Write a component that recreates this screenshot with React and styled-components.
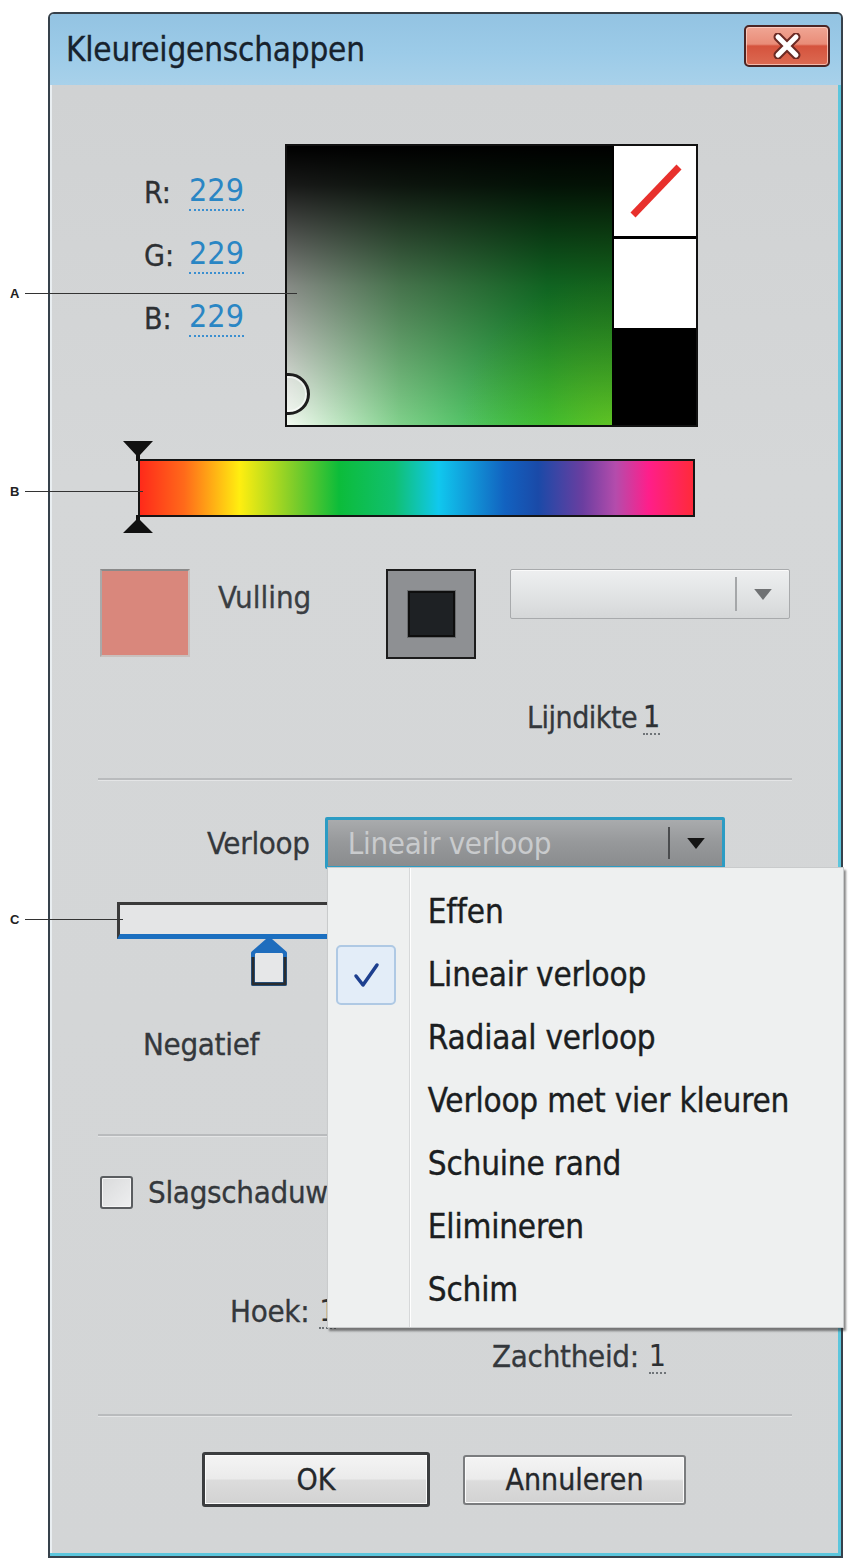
import React from 'react';
import styled, {createGlobalStyle} from 'styled-components';

const font = `"DejaVu Sans Condensed", "DejaVu Sans", "Liberation Sans", sans-serif`;

const GlobalStyle = createGlobalStyle`
  html, body {
    margin: 0;
    padding: 0;
    background: #ffffff;
  }
  body {
    font-family: ${font};
    color: #2b2f33;
  }
`;

const Page = styled.div`
  position: relative;
  width: 854px;
  height: 1562px;
  overflow: hidden;
  padding-top: 12px;
  box-sizing: border-box;
`;

const Callout = styled.div`
  position: absolute;
  left: 10px;
  top: ${p => p.$top}px;
  display: flex;
  align-items: center;
  gap: 6px;
  font-family: "Liberation Sans", sans-serif;
  font-weight: bold;
  font-size: 13px;
  color: #222;
  z-index: 5;

  &::after {
    content: '';
    display: block;
    width: ${p => p.$len}px;
    height: 1.5px;
    background: #333;
  }
`;

const Window = styled.div`
  margin-left: 48px;
  width: 795px;
  height: 1546px;
  box-sizing: border-box;
  border: 2px solid #36414b;
  border-radius: 6px 6px 0 0;
  background: linear-gradient(180deg, #cfd1d2 0%, #d5d7d8 30%, #d3d5d6 100%);
  box-shadow: inset -3px -3px 0 #5cc6dd, inset 2px 0 0 #e9eef1;
  display: flex;
  flex-direction: column;
`;

const TitleBar = styled.div`
  height: 71px;
  display: flex;
  align-items: center;
  justify-content: space-between;
  padding: 0 11px 0 16px;
  border-radius: 4px 4px 0 0;
  background: linear-gradient(180deg, #93c3e2 0%, #9ccbe8 55%, #a8d1ea 100%);
`;

const Title = styled.h1`
  margin: 0;
  font-size: 33px;
  font-weight: normal;
  color: #17222d;
  letter-spacing: -0.2px;
  -webkit-text-stroke: 0.3px #17222d;
`;

const CloseButton = styled.button`
  width: 86px;
  height: 42px;
  margin-top: -8px;
  border: 2px solid #4b2524;
  border-radius: 5px;
  background: linear-gradient(180deg, #f0a694 0%, #e98c78 45%, #d5533d 50%, #dc6a52 100%);
  box-shadow: inset 0 0 0 1px rgba(255, 220, 210, 0.7);
  display: flex;
  align-items: center;
  justify-content: center;
  padding: 0;
`;

const Body = styled.div`
  flex: 1;
  padding: 59px 49px 0 48px;
  display: flex;
  flex-direction: column;
`;

const PickerRow = styled.div`
  display: flex;
  height: 283px;
`;

const RgbColumn = styled.div`
  width: 187px;
  padding: 28px 0 0 46px;
  box-sizing: border-box;
  display: flex;
  flex-direction: column;
  gap: 23px;
`;

const RgbRow = styled.div`
  display: flex;
  align-items: center;
  height: 40px;
`;

const RgbLabel = styled.span`
  width: 45px;
  font-size: 30px;
  color: #2d3033;
  -webkit-text-stroke: 0.3px #2d3033;
`;

const Value = styled.span`
  font-size: ${p => p.$size || 31}px;
  color: ${p => p.$color || '#2d3033'};
  border-bottom: 2px dotted ${p => p.$line || '#6f7478'};
  line-height: 1.1;
  margin-left: ${p => p.$ml || 0}px;
`;

const Picker = styled.div`
  width: 413px;
  height: 283px;
  box-sizing: border-box;
  border: 2px solid #111;
  display: flex;
  background: #000;
`;

const SvField = styled.div`
  position: relative;
  width: 325px;
  overflow: hidden;
  background:
    linear-gradient(180deg, #000 0%, rgba(0, 0, 0, 0.9) 14%, rgba(0, 0, 0, 0.45) 50%, rgba(0, 0, 0, 0) 100%),
    radial-gradient(circle at 100% 100%, rgba(120, 200, 30, 0.7) 0%, rgba(120, 200, 30, 0) 35%),
    linear-gradient(90deg, #f3faf1 0%, #7fd08a 35%, #1db43c 80%, #22b532 100%);
`;

const SvMarker = styled.div`
  position: absolute;
  left: -19px;
  bottom: 10px;
  width: 36px;
  height: 36px;
  border: 3px solid #1d1d1d;
  border-radius: 50%;
  background: rgba(255, 255, 255, 0.3);
  box-shadow: inset 0 0 0 2px rgba(255, 255, 255, 0.6);
`;

const SwatchColumn = styled.div`
  flex: 1;
  display: flex;
  flex-direction: column;
  gap: 3px;
  padding-left: 2px;
`;

const SwatchCell = styled.div`
  height: ${p => p.$h}px;
  background: ${p => p.$bg};
  display: flex;
  align-items: center;
  justify-content: center;
`;

const HueRow = styled.div`
  position: relative;
  margin: 32px 0 0 40px;
  width: 557px;
  height: 58px;
`;

const HueBar = styled.div`
  height: 100%;
  box-sizing: border-box;
  border: 2px solid #151515;
  background: linear-gradient(90deg,
    #ff2a1a 0%, #ff6a1a 8%, #ffee10 18%, #7ccc2a 28%, #0cbc3a 36%,
    #10c070 46%, #10c8ee 54%, #1262c0 66%, #1a4aa8 72%, #6a3ea0 80%,
    #b44cac 86%, #ff1e8a 92%, #ff2a3a 100%);
`;

const HueHandle = styled.svg`
  position: absolute;
  left: -15px;
  ${p => (p.$side === 'top' ? 'top: -18px;' : 'bottom: -16px;')}
`;

const FillRow = styled.div`
  display: flex;
  align-items: flex-start;
  margin-top: 52px;
  height: 90px;
`;

const FillSwatch = styled.div`
  width: 90px;
  height: 88px;
  margin-left: 2px;
  box-sizing: border-box;
  background: #d9877c;
  border: 2px solid #c9c0bd;
  border-top-color: #8a8a8a;
  border-left-color: #a9a9a9;
`;

const FillLabel = styled.span`
  width: 168px;
  margin: 10px 0 0 28px;
  font-size: 31px;
  color: #3a3e42;
  -webkit-text-stroke: 0.3px #3a3e42;
`;

const StrokeBox = styled.div`
  width: 90px;
  height: 90px;
  box-sizing: border-box;
  border: 2px solid #1c1c1c;
  background: #8e9093;
  display: flex;
  align-items: center;
  justify-content: center;
`;

const StrokeInner = styled.div`
  width: 47px;
  height: 46px;
  box-sizing: border-box;
  background: #1e2124;
  border: 2px solid #0e0e0e;
  box-shadow: 0 0 0 1px #6a6c6e;
`;

const Select = styled.div`
  position: relative;
  display: flex;
  align-items: center;
  box-sizing: border-box;
  width: ${p => p.$w}px;
  height: ${p => p.$h}px;
  margin-left: ${p => p.$ml || 0}px;
  border: ${p => (p.$active ? '3px solid #2c9cc4' : '1px solid #a8aaac')};
  border-radius: 2px;
  background: ${p => (p.$active
    ? 'linear-gradient(180deg, #a9abad 0%, #96989a 50%, #8a8c8e 100%)'
    : 'linear-gradient(180deg, #eeeff0 0%, #e2e4e5 50%, #d5d7d8 100%)')};
  box-shadow: ${p => (p.$active ? 'none' : 'inset 0 1px 0 #fafafa')};
`;

const SelectText = styled.span`
  flex: 1;
  padding-left: 20px;
  font-size: 31px;
  color: #c9cbcd;
  letter-spacing: -0.3px;
`;

const SelectButton = styled.div`
  width: ${p => p.$w}px;
  height: 70%;
  margin-left: auto;
  display: flex;
  align-items: center;
  justify-content: center;
  border-left: 2px solid ${p => p.$line};
`;

const WidthRow = styled.div`
  margin-top: 40px;
  height: 36px;
  padding-left: 429px;
  display: flex;
  align-items: center;
  font-size: 30px;
  color: #34383c;
  letter-spacing: -0.5px;
  -webkit-text-stroke: 0.3px #34383c;
`;

const Separator = styled.div`
  margin-top: ${p => p.$mt}px;
  height: 2px;
  background: #b9bbbd;
  box-shadow: 0 1px 0 #e4e5e6;
`;

const GradientRow = styled.div`
  position: relative;
  z-index: 3;
  margin-top: 37px;
  height: 52px;
  padding-left: 109px;
  display: flex;
  align-items: center;
`;

const Label = styled.span`
  font-size: 31px;
  color: #34383c;
  margin-right: ${p => p.$mr || 0}px;
  letter-spacing: -0.3px;
  -webkit-text-stroke: 0.3px #34383c;
`;

const Menu = styled.ul`
  position: absolute;
  left: -1px;
  top: calc(100% + 1px);
  width: 515px;
  margin: 0;
  padding: 12px 0 6px;
  list-style: none;
  background: #eef0f0;
  border: 1px solid #c9cbcc;
  box-shadow: 2px 3px 2px rgba(40, 40, 40, 0.55);

  &::before {
    content: '';
    position: absolute;
    top: 0;
    bottom: 0;
    left: 81px;
    width: 1px;
    background: #d6d8d9;
    box-shadow: 1px 0 0 #ffffff;
  }
`;

const MenuItem = styled.li`
  display: flex;
  align-items: center;
  height: 63px;
  font-size: 33px;
  color: #1b1e21;
  letter-spacing: -0.2px;
  -webkit-text-stroke: 0.35px #1b1e21;
`;

const MenuIcon = styled.span`
  width: 82px;
  margin-right: 18px;
  padding-left: 8px;
  box-sizing: border-box;
  display: flex;
`;

const CheckBox = styled.span`
  width: 60px;
  height: 60px;
  box-sizing: border-box;
  border: 2px solid #afc9e4;
  border-radius: 5px;
  background: #e3edf8;
  display: flex;
  align-items: center;
  justify-content: center;
`;

const Slider = styled.div`
  position: relative;
  margin: 33px 0 0 19px;
  width: 600px;
  height: 82px;
`;

const SliderTrack = styled.div`
  height: 37px;
  box-sizing: border-box;
  border: 3px solid #3a3a3a;
  border-bottom: 5px solid #1b6fc0;
  border-right: none;
  background: #e4e5e6;
`;

const SliderStop = styled.svg`
  position: absolute;
  left: ${p => p.$left}px;
  top: 35px;
`;

const TextRow = styled.div`
  margin-top: ${p => p.$mt}px;
  padding-left: ${p => p.$pl}px;
  height: 40px;
  display: flex;
  align-items: center;
`;

const Check = styled.span`
  width: 33px;
  height: 33px;
  box-sizing: border-box;
  margin: 0 15px 0 2px;
  border: 2px solid #5a5d60;
  border-radius: 3px;
  background: linear-gradient(135deg, #d9dadb 0%, #eeeff0 100%);
  box-shadow: inset 0 0 0 1px #f5f5f5;
`;

const ButtonRow = styled.div`
  margin-top: 36px;
  padding-left: 104px;
  display: flex;
  align-items: center;
  gap: 33px;
`;

const Button = styled.button`
  width: ${p => p.$w}px;
  height: ${p => (p.$default ? 55 : 50)}px;
  box-sizing: border-box;
  border: ${p => (p.$default ? '3px solid #3b3d3f' : '2px solid #7a7c7e')};
  border-radius: 3px;
  background: linear-gradient(180deg, #f4f4f4 0%, #ebebeb 48%, #dcdcdc 52%, #d2d2d2 100%);
  box-shadow: inset 0 0 0 1px #fbfbfb;
  font-family: ${font};
  font-size: 30px;
  color: #25282b;
  -webkit-text-stroke: 0.3px #25282b;
  padding: 0;
`;

const Triangle = ({color, w = 16, h = 10}) => (
   <svg width={w} height={h} viewBox="0 0 16 10">
      <polygon points="0,0 16,0 8,10" fill={color}/>
   </svg>
);

const menuItems = [
   'Effen',
   'Lineair verloop',
   'Radiaal verloop',
   'Verloop met vier kleuren',
   'Schuine rand',
   'Elimineren',
   'Schim',
];

const App = () => {
   return (
      <Page>
         <GlobalStyle/>
         <Callout $top={286} $len={272}>A</Callout>
         <Callout $top={484} $len={118}>B</Callout>
         <Callout $top={912} $len={98}>C</Callout>

         <Window>
            <TitleBar>
               <Title>Kleureigenschappen</Title>
               <CloseButton aria-label="Sluiten">
                  <svg width="34" height="26" viewBox="0 0 34 26">
                     <path d="M8 4 L26 22 M26 4 L8 22" stroke="#6b2a24" strokeWidth="9" strokeLinecap="round"/>
                     <path d="M8 4 L26 22 M26 4 L8 22" stroke="#ffffff" strokeWidth="5" strokeLinecap="round"/>
                  </svg>
               </CloseButton>
            </TitleBar>

            <Body>
               <PickerRow>
                  <RgbColumn>
                     {['R', 'G', 'B'].map(c => (
                        <RgbRow key={c}>
                           <RgbLabel>{c}:</RgbLabel>
                           <Value $size={32} $color="#2a86c4" $line="#3b8fd0">229</Value>
                        </RgbRow>
                     ))}
                  </RgbColumn>
                  <Picker>
                     <SvField>
                        <SvMarker/>
                     </SvField>
                     <SwatchColumn>
                        <SwatchCell $h={90} $bg="#ffffff">
                           <svg width="60" height="60" viewBox="0 0 60 60">
                              <line x1="8" y1="54" x2="54" y2="6" stroke="#e8302c" strokeWidth="7"/>
                           </svg>
                        </SwatchCell>
                        <SwatchCell $h={89} $bg="#ffffff"/>
                     </SwatchColumn>
                  </Picker>
               </PickerRow>

               <HueRow>
                  <HueBar/>
                  <HueHandle $side="top" width="30" height="20" viewBox="0 0 30 20">
                     <polygon points="0,0 30,0 17,14 17,20 13,20 13,14" fill="#111"/>
                  </HueHandle>
                  <HueHandle $side="bottom" width="30" height="18" viewBox="0 0 30 18">
                     <polygon points="0,18 30,18 17,5 17,0 13,0 13,5" fill="#111"/>
                  </HueHandle>
               </HueRow>

               <FillRow>
                  <FillSwatch/>
                  <FillLabel>Vulling</FillLabel>
                  <StrokeBox>
                     <StrokeInner/>
                  </StrokeBox>
                  <Select $w={280} $h={50} $ml={34}>
                     <SelectButton $w={52} $line="#a5a7a9">
                        <Triangle color="#707274" w={18} h={11}/>
                     </SelectButton>
                  </Select>
               </FillRow>

               <WidthRow>
                  Lijndikte<Value $size={30} $ml={6}>1</Value>
               </WidthRow>

               <Separator $mt={43}/>

               <GradientRow>
                  <Label $mr={15}>Verloop</Label>
                  <Select $w={400} $h={52} $active>
                     <SelectText>Lineair verloop</SelectText>
                     <SelectButton $w={52} $line="#4a4c4e">
                        <Triangle color="#141414" w={18} h={11}/>
                     </SelectButton>
                     <Menu>
                        {menuItems.map(item => (
                           <MenuItem key={item}>
                              <MenuIcon>
                                 {item === 'Lineair verloop' && (
                                    <CheckBox>
                                       <svg width="30" height="30" viewBox="0 0 30 30">
                                          <path d="M5 16 L12 25 L26 5" fill="none" stroke="#1d3f8f" strokeWidth="3.5" strokeLinecap="round" strokeLinejoin="round"/>
                                       </svg>
                                    </CheckBox>
                                 )}
                              </MenuIcon>
                              {item}
                           </MenuItem>
                        ))}
                     </Menu>
                  </Select>
               </GradientRow>

               <Slider>
                  <SliderTrack/>
                  <SliderStop $left={133} width="38" height="50" viewBox="0 0 38 50">
                     <polygon points="19,2 35,16 35,47 3,47 3,16" fill="#e6e7e8" stroke="#1f6dbd" strokeWidth="4" strokeLinejoin="round"/>
                     <polygon points="19,2 35,16 3,16" fill="#1f6dbd"/>
                     <polyline points="35,20 35,47 3,47 3,20" fill="none" stroke="#2a2c2e" strokeWidth="3"/>
                  </SliderStop>
               </Slider>

               <TextRow $mt={40} $pl={45}>
                  <Label>Negatief</Label>
               </TextRow>

               <Separator $mt={70}/>

               <TextRow $mt={36} $pl={0}>
                  <Check/>
                  <Label>Slagschaduw</Label>
               </TextRow>

               <TextRow $mt={79} $pl={132}>
                  <Label>Hoek:</Label>
                  <Value $size={30} $ml={10}>1</Value>
               </TextRow>

               <TextRow $mt={5} $pl={394}>
                  <Label>Zachtheid:</Label>
                  <Value $size={30} $ml={10}>1</Value>
               </TextRow>

               <Separator $mt={38}/>

               <ButtonRow>
                  <Button $w={228} $default>OK</Button>
                  <Button $w={223}>Annuleren</Button>
               </ButtonRow>
            </Body>
         </Window>
      </Page>
   );
};

export default App;
